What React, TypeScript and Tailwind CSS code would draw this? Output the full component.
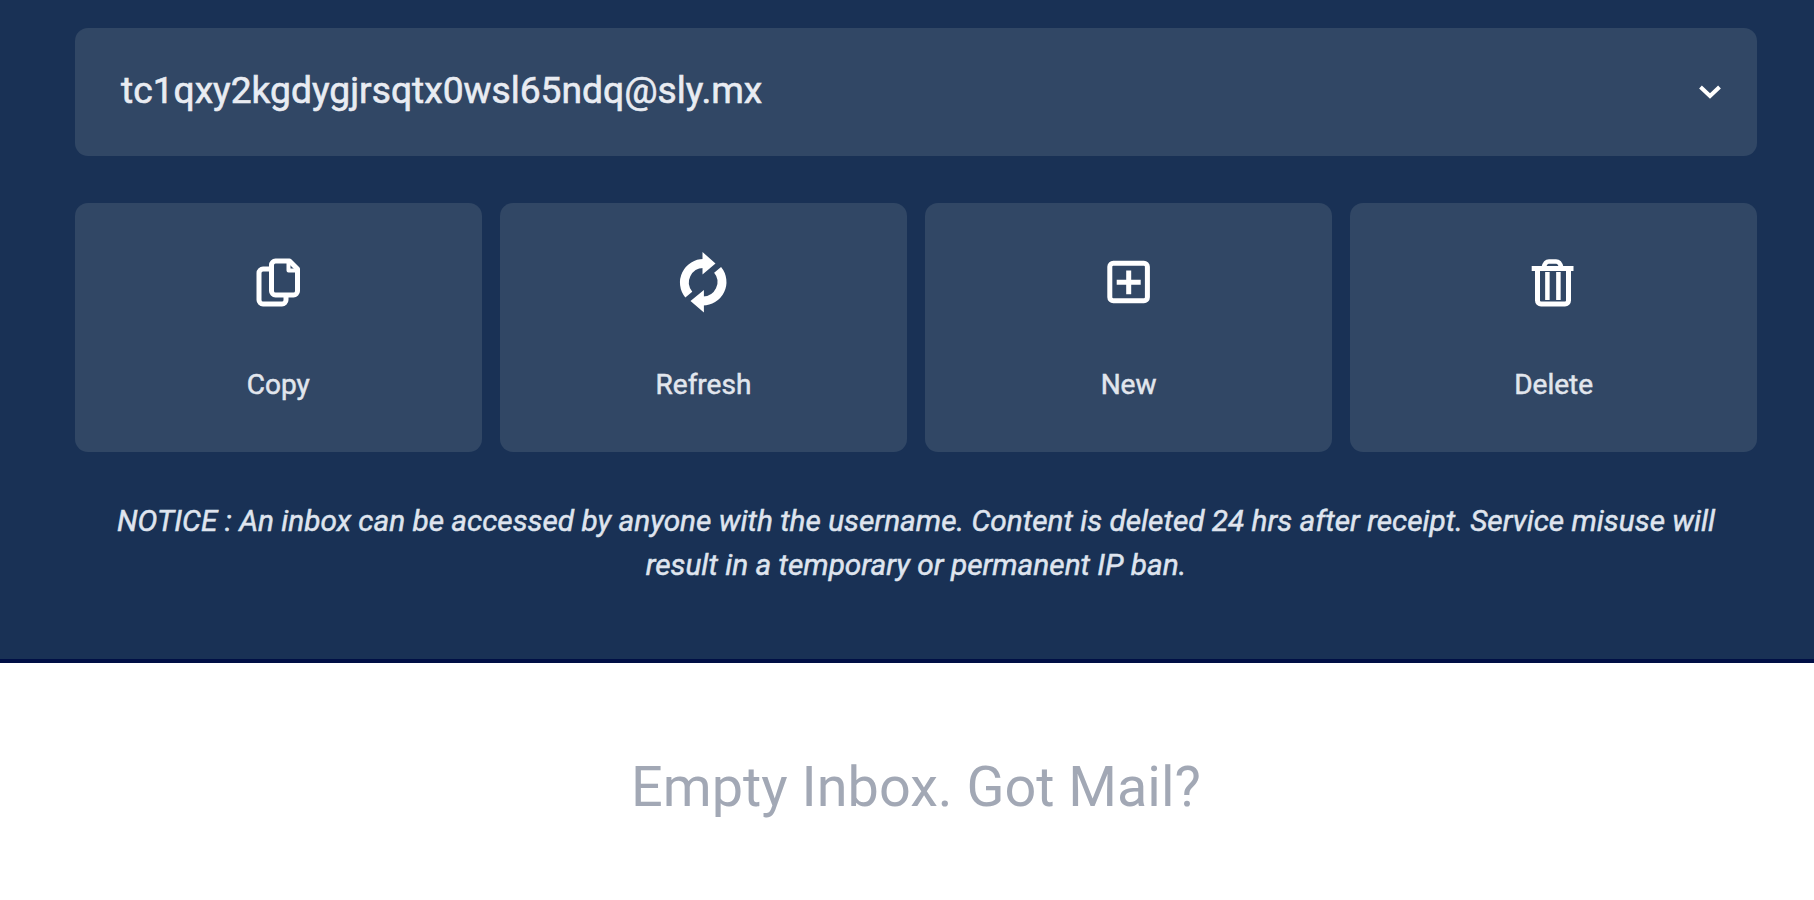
import React from 'react';

function CopyIcon() {
  return (
    <svg viewBox="0 0 60 60" className="size-[60px] overflow-visible" fill="none" stroke="currentColor" strokeWidth="5" strokeLinejoin="round">
      <path d="M27.5 9H41.5L49.5 17V39a4 4 0 0 1-4 4h-18a4 4 0 0 1-4-4V13a4 4 0 0 1 4-4z" />
      <path d="M40.5 9.5V18.5H49" strokeWidth="4" />
      <path d="M21.5 17H15a4 4 0 0 0-4 4v27a4 4 0 0 0 4 4h19a4 4 0 0 0 4-4v-3" />
    </svg>
  );
}

function RefreshIcon() {
  return (
    <svg viewBox="0 0 60 60" className="size-[60px] overflow-visible" fill="none" stroke="currentColor" strokeWidth="9">
      <path d="M15.8 42.6A19 19 0 0 1 31 11.5" />
      <path d="M44.6 17.8A19 19 0 0 1 29.4 48.9" />
      <path d="M29.5 0L42.5 11.5L29.5 22.5zM30.9 60.5L17.5 49L30.9 38z" fill="currentColor" stroke="none" />
    </svg>
  );
}

function NewIcon() {
  return (
    <svg viewBox="0 0 60 60" className="size-[60px] overflow-visible" fill="none" stroke="currentColor" strokeWidth="5">
      <rect x="10.8" y="11.2" width="37.6" height="37.6" rx="3.5" />
      <path d="M17.7 30.3H41.7M29.7 18.5V42.3" />
    </svg>
  );
}

function DeleteIcon() {
  return (
    <svg viewBox="0 0 60 60" className="size-[60px] overflow-visible" fill="none" stroke="currentColor" strokeWidth="5">
      <path d="M7.7 16.5H49.5" />
      <path d="M19.5 16C20.5 11.5 22 9.5 25 9.5H32C35 9.5 36.5 11.5 37.5 16" strokeWidth="4.5" />
      <path d="M13.5 17V48.5a3.5 3.5 0 0 0 3.5 3.5H41a3.5 3.5 0 0 0 3.5-3.5V17" />
      <path d="M23.4 20V48M34.4 20V48" strokeWidth="4.5" />
    </svg>
  );
}

const actions = [
  { label: 'Copy', icon: <CopyIcon /> },
  { label: 'Refresh', icon: <RefreshIcon /> },
  { label: 'New', icon: <NewIcon /> },
  { label: 'Delete', icon: <DeleteIcon /> },
];

export default function App() {
  return (
    <div className="flex h-[900px] w-[1814px] flex-col overflow-hidden bg-white font-[Roboto,sans-serif]">
      <section className="h-[663px] border-b-4 border-[#000f45] bg-[#193155] pt-[28px] pr-[57px] pl-[75px] text-white">
        {/* Address selector */}
        <button className="flex h-[128px] w-full items-center justify-between rounded-[13px] bg-[#314765] pr-[36px] pb-[2px] pl-[46px] text-left">
          <span className="text-[37.2px] text-[#e9ecf2] [-webkit-text-stroke:0.6px]">tc1qxy2kgdygjrsqtx0wsl65ndq@sly.mx</span>
          <svg viewBox="0 0 22 16" className="mt-0.5 h-4 w-[22px]" fill="none" stroke="currentColor" strokeWidth="4">
            <path d="M1.5 3L11 12L20.5 3" />
          </svg>
        </button>

        {/* Actions */}
        <div className="mt-[47px] grid grid-cols-4 gap-[18.5px]">
          {actions.map((action) => (
            <button key={action.label} className="flex h-[249px] flex-col items-center rounded-[13px] bg-[#314765] pt-[49px]">
              {action.icon}
              <span className="mt-[55px] text-[28px] leading-[36px] text-[#e2e6ed] [-webkit-text-stroke:0.5px]">{action.label}</span>
            </button>
          ))}
        </div>

        <p className="mt-[47px] text-center text-[29.8px] leading-[44px] text-[#dfe4ee] italic [-webkit-text-stroke:0.5px]">
          NOTICE : An inbox can be accessed by anyone with the username. Content is deleted 24 hrs after receipt. Service misuse will
          <br />
          result in a temporary or permanent IP ban.
        </p>
      </section>

      <section className="flex grow justify-center pt-[91px] pl-[18px]">
        <h2 className="text-[55.8px] leading-[66px] text-[#a2a8b5]">Empty Inbox. Got Mail?</h2>
      </section>
    </div>
  );
}
